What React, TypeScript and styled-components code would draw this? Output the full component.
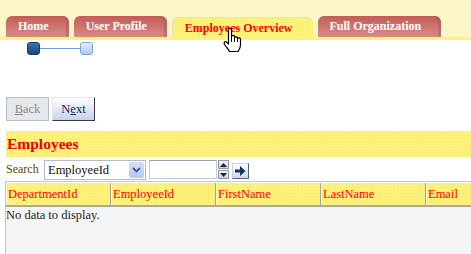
import React from 'react';
import styled, {createGlobalStyle} from 'styled-components';

const GlobalStyle = createGlobalStyle`
    html, body {
        margin: 0;
        padding: 0;
        background: #fff;
        overflow: hidden;
        font-family: "Liberation Serif", "Times New Roman", serif;
        font-size: 12px;
    }
`;

const dots = `radial-gradient(circle, rgba(235, 205, 70, 0.3) 0.6px, transparent 0.9px) 0 0 / 3px 3px`;

const tabs = ['Home', 'User Profile', 'Employees Overview', 'Full Organization'];
const columns = ['DepartmentId', 'EmployeeId', 'FirstName', 'LastName', 'Email'];

const App: React.FC = () => {
    return (
        <>
            <GlobalStyle/>
            <TabBar>
                {tabs.map((t, i) => (
                    <Tab key={t} $active={i === 2}>
                        {t}
                        {i === 2 && <HandCursor/>}
                    </Tab>
                ))}
            </TabBar>
            <Page>
                <Train>
                    <Stop $current/>
                    <TrainLine/>
                    <Stop/>
                </Train>
                <ButtonRow>
                    <NavButton disabled><u>B</u>ack</NavButton>
                    <NavButton>N<u>e</u>xt</NavButton>
                </ButtonRow>
                <SectionTitle>Employees</SectionTitle>
                <SearchRow>
                    <SearchLabel>Search</SearchLabel>
                    <Select>
                        <span>EmployeeId</span>
                        <DropButton>
                            <svg width="9" height="6" viewBox="0 0 9 6">
                                <path d="M1 1 L4.5 4.5 L8 1" stroke="#3a5a8c" strokeWidth="1.8" fill="none"/>
                            </svg>
                        </DropButton>
                    </Select>
                    <TextInput/>
                    <Spin>
                        <SpinPart>
                            <svg width="7" height="4" viewBox="0 0 7 4"><path d="M0 4 L3.5 0 L7 4 Z" fill="#222"/></svg>
                        </SpinPart>
                        <SpinPart>
                            <svg width="7" height="4" viewBox="0 0 7 4"><path d="M0 0 L3.5 4 L7 0 Z" fill="#222"/></svg>
                        </SpinPart>
                    </Spin>
                    <GoButton>
                        <svg width="11" height="10" viewBox="0 0 11 10">
                            <path d="M0 3.5 H5 V0 L10.5 5 L5 10 V6.5 H0 Z" fill="#0e3a5c"/>
                        </svg>
                    </GoButton>
                </SearchRow>
                <Grid>
                    <HeaderRow>
                        {columns.map(c => <HeaderCell key={c}>{c}</HeaderCell>)}
                    </HeaderRow>
                    <GridBody>No data to display.</GridBody>
                </Grid>
            </Page>
        </>
    );
};

export default App;

const HandCursor: React.FC = () => (
    <CursorWrap>
        <svg width="19" height="25" viewBox="0 0 19 25">
            <path
                d="M5.5 1.5 C5.5 0 8.5 0 8.5 1.5 V9 V8.5 C8.5 7 11.5 7 11.5 8.5 V10 C11.5 8.5 14.5 8.5 14.5 10 V11 C14.5 9.5 17.5 9.5 17.5 11 V17 C17.5 20 16 22 15 23.5 H6.5 C5.5 21.5 3.5 19.5 1.5 16.5 C0.5 14.5 2 13 3.5 14 L5.5 16 Z"
                fill="#fff" stroke="#000" strokeWidth="1.2" strokeLinejoin="round"/>
            <path d="M8.5 9 V14 M11.5 10 V14 M14.5 11 V14" stroke="#000" strokeWidth="1"/>
        </svg>
    </CursorWrap>
);

const TabBar = styled.div`
    display: flex;
    align-items: flex-end;
    gap: 5px;
    height: 37px;
    padding-left: 6px;
    background: #fcf7c9;
    border-bottom: 3px solid #fff27a;
`;

const Tab = styled.div<{ $active?: boolean }>`
    position: relative;
    height: ${p => p.$active ? '20px' : '21px'};
    padding: 3px 20px 0 12px;
    box-sizing: border-box;
    border-radius: 6px 6px 0 0;
    font-weight: bold;
    font-size: 12px;
    line-height: 15px;
    white-space: nowrap;
    color: ${p => p.$active ? '#ff0000' : '#fff'};
    background: ${p => p.$active
        ? `${dots}, #fff27a`
        : 'linear-gradient(#c45c57, #d78b86)'};
    border-top: ${p => p.$active ? '1px solid #e4dfb6' : 'none'};
    border-left: ${p => p.$active ? '1px solid #e4dfb6' : 'none'};
    box-shadow: ${p => p.$active ? 'none' : 'inset -3px 0 0 rgba(150, 80, 75, 0.35)'};
`;

const CursorWrap = styled.div`
    position: absolute;
    left: 50px;
    top: 10px;
    line-height: 0;
    pointer-events: none;
`;

const Page = styled.div`
    padding-left: 6px;
    overflow: hidden;
`;

const Train = styled.div`
    display: flex;
    align-items: center;
    margin: 2px 0 0 21px;
    height: 13px;
`;

const Stop = styled.div<{ $current?: boolean }>`
    width: 13px;
    height: 13px;
    box-sizing: border-box;
    border-radius: 3px;
    border: 1px solid ${p => p.$current ? '#123e70' : '#7fa3e0'};
    background: ${p => p.$current
        ? 'linear-gradient(#3a74b8, #15457e)'
        : 'linear-gradient(#e4eeff, #b0c8f4)'};
`;

const TrainLine = styled.div`
    width: 40px;
    height: 1px;
    background: #6f9fdc;
`;

const ButtonRow = styled.div`
    display: flex;
    gap: 3px;
    margin-top: 42px;
`;

const NavButton = styled.button`
    width: 43px;
    height: 24px;
    padding: 0;
    font-family: "Liberation Serif", "Times New Roman", serif;
    font-size: 12.5px;
    color: #0f2a5a;
    background: linear-gradient(#ffffff, #c5d1ec);
    border: 1px solid;
    border-color: #dfe5f0 #3c3c3c #3c3c3c #dfe5f0;

    &:disabled {
        color: #888;
        background: #e4e7ec;
        border-color: #b8bec8;
    }
`;

const SectionTitle = styled.div`
    margin-top: 10px;
    height: 26px;
    padding-left: 1px;
    display: flex;
    align-items: center;
    font-size: 15.5px;
    font-weight: bold;
    color: #f00000;
    background: ${dots}, #fff27a;
`;

const SearchRow = styled.div`
    display: flex;
    align-items: center;
    height: 24px;
`;

const SearchLabel = styled.span`
    color: #5e4800;
    font-size: 12px;
    width: 38px;
`;

const Select = styled.div`
    display: flex;
    align-items: center;
    justify-content: space-between;
    width: 102px;
    height: 20px;
    box-sizing: border-box;
    border: 1px solid #b4bcc8;
    padding: 0 1px 0 3px;
    font-size: 12.5px;
    color: #111;
    margin-top: 2px;
`;

const DropButton = styled.div`
    width: 15px;
    height: 16px;
    display: flex;
    align-items: center;
    justify-content: center;
    background: linear-gradient(#d4e0fa, #b5c8f0);
    border-radius: 2px;
`;

const TextInput = styled.div`
    width: 68px;
    height: 19px;
    box-sizing: border-box;
    margin-left: 3px;
    border: 1px solid #c4cad4;
    border-top-color: #9aa2b0;
    background: #fff;
    margin-top: 1px;
`;

const Spin = styled.div`
    display: flex;
    flex-direction: column;
    gap: 1px;
    margin-left: 1px;
    margin-top: 1px;
`;

const SpinPart = styled.div`
    width: 11px;
    height: 9px;
    box-sizing: border-box;
    display: flex;
    align-items: center;
    justify-content: center;
    background: linear-gradient(#f2f4f8, #c8cfdc);
    border: 1px solid #8f98a8;
`;

const GoButton = styled.div`
    width: 17px;
    height: 16px;
    box-sizing: border-box;
    margin-left: 3px;
    margin-top: 3px;
    display: flex;
    align-items: center;
    justify-content: center;
    background: linear-gradient(#ffffff, #cfd8ea);
    border: 1px solid;
    border-color: #c8d0de #5a6070 #5a6070 #c8d0de;
`;

const Grid = styled.div`
    width: 540px;
    border-top: 1px solid #d4cc8c;
    border-left: 1px solid #c4c4c4;
    margin-left: -1px;
`;

const HeaderRow = styled.div`
    display: grid;
    grid-template-columns: 105px 105px 105px 105px 120px;
    height: 22px;
    border-top: 1px solid #fff;
    border-bottom: 2px solid #a8a8a8;
    background: ${dots}, #fff27a;
`;

const HeaderCell = styled.div`
    display: flex;
    align-items: center;
    padding-left: 2px;
    color: #ff0000;
    font-size: 12.5px;
    border-right: 1px solid #a4a4a4;
    box-shadow: inset 1px 0 0 #fffbd0;
`;

const GridBody = styled.div`
    height: 48px;
    padding: 1px 0 0 0;
    font-size: 12.5px;
    color: #222;
    background: #f5f5f5;
`;
